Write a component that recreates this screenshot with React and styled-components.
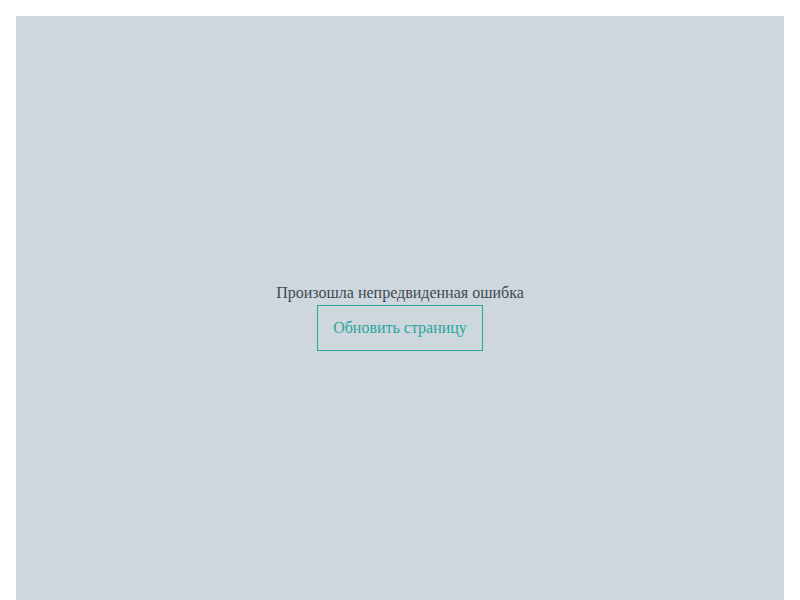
import React from "react";
import styled, { createGlobalStyle } from "styled-components";

const Global = createGlobalStyle`
  html, body { margin: 0; padding: 0; background: #fff; }
  body { padding: 16px; font-family: "Liberation Serif", "Times New Roman", serif; }
`;

const Screen = styled.div`
  height: 100vh;
  padding-top: 1px;
  box-sizing: content-box;
  background: #cfd7de;
  display: flex;
  flex-direction: column;
  align-items: center;
  justify-content: center;
  gap: 3px;
`;

const Message = styled.div`
  font-size: 16px;
  line-height: 19px;
  color: #3b4a52;
`;

const ReloadButton = styled.button`
  font-family: "Liberation Serif", "Times New Roman", serif;
  font-size: 16px;
  line-height: 20px;
  color: #26a69a;
  background: transparent;
  border: 1px solid #26a69a;
  padding: 12px 15px;
  cursor: pointer;
`;

export default function App() {
  return (
    <>
      <Global />
      <Screen>
        <Message>Произошла непредвиденная ошибка</Message>
        <ReloadButton onClick={() => window.location.reload()}>Обновить страницу</ReloadButton>
      </Screen>
    </>
  );
}
